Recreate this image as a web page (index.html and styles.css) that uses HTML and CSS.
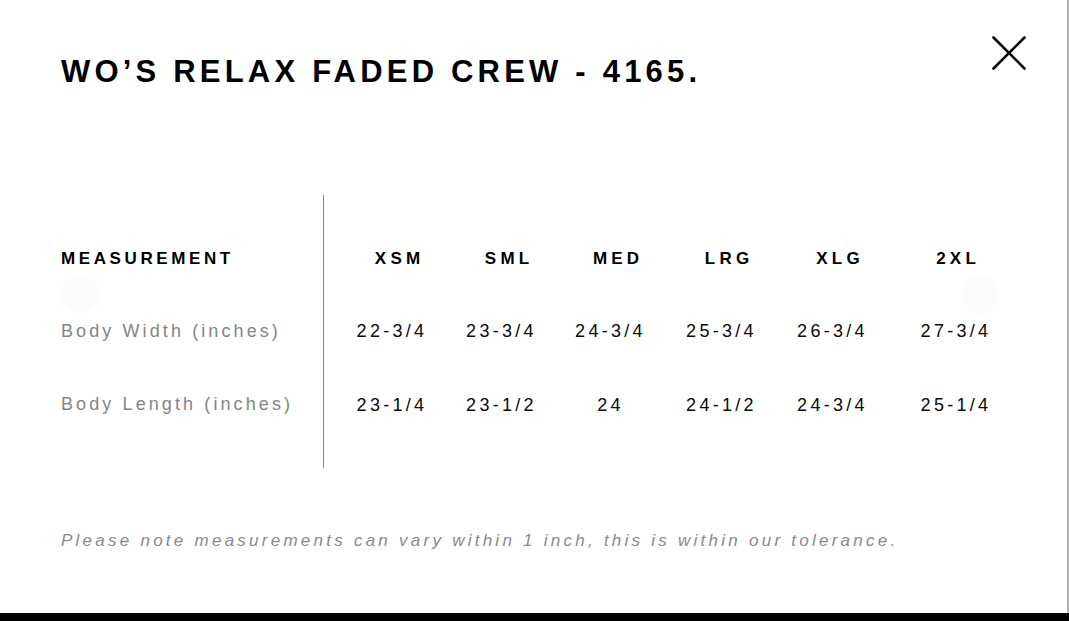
FILE: index.html
```html
<!DOCTYPE html>
<html lang="en">
<head>
<meta charset="utf-8">
<title>Size chart</title>
<link rel="stylesheet" href="styles.css">
</head>
<body>
<div class="modal">
  <header class="modal-head">
    <h1 class="title">WO’S RELAX FADED CREW - 4165.</h1>
    <button class="close" aria-label="Close">
      <svg width="34" height="34" viewBox="0 0 34 34"><path d="M1.5 1.5 L32.5 32.5 M32.5 1.5 L1.5 32.5" stroke="#000" stroke-width="2.6" stroke-linecap="round" fill="none"/></svg>
    </button>
  </header>

  <section class="chart">
    <div class="labels">
      <div class="cell head-label">MEASUREMENT</div>
      <div class="cell label">Body Width (inches)</div>
      <div class="cell label">Body Length (inches)</div>
    </div>
    <div class="sizes">
      <div class="cell size shift">XSM</div>
      <div class="cell size shift">SML</div>
      <div class="cell size shift">MED</div>
      <div class="cell size shift">LRG</div>
      <div class="cell size shift">XLG</div>
      <div class="cell size">2XL</div>

      <div class="cell val">22-3/4</div>
      <div class="cell val">23-3/4</div>
      <div class="cell val">24-3/4</div>
      <div class="cell val">25-3/4</div>
      <div class="cell val">26-3/4</div>
      <div class="cell val">27-3/4</div>

      <div class="cell val">23-1/4</div>
      <div class="cell val">23-1/2</div>
      <div class="cell val">24</div>
      <div class="cell val">24-1/2</div>
      <div class="cell val">24-3/4</div>
      <div class="cell val">25-1/4</div>
    </div>
    <span class="arrow arrow-left"></span>
    <span class="arrow arrow-right"></span>
  </section>

  <p class="note">Please note measurements can vary within 1 inch, this is within our tolerance.</p>
</div>
<div class="page-bar"></div>
</body>
</html>
```

FILE: styles.css
```css
* { box-sizing: border-box; }

html, body {
  margin: 0;
  padding: 0;
  background: #fff;
  font-family: "Liberation Sans", Arial, sans-serif;
  overflow: hidden;
}

.modal {
  width: 1069px;
  height: 613px;
  background: #fff;
  border-right: 2px solid #b5b5b5;
  padding: 0 42px 0 61px;
  display: flex;
  flex-direction: column;
  position: relative;
}

.modal-head {
  display: flex;
  justify-content: space-between;
  align-items: flex-start;
  padding-top: 36px;
}

.title {
  margin: 18px 0 0;
  font-size: 31px;
  line-height: 36px;
  font-weight: 700;
  letter-spacing: 4.2px;
  color: #000;
}

.close {
  border: 0;
  background: none;
  padding: 0;
  margin: 0 -1px 0 0;
  width: 34px;
  height: 34px;
  cursor: pointer;
}
.close svg { display: block; }

.chart {
  margin-top: 105px;
  height: 273px;
  display: flex;
  position: relative;
}

.labels {
  width: 262px;
  padding-top: 28px;
  display: flex;
  flex-direction: column;
}

.cell {
  height: 72px;
  display: flex;
  align-items: center;
  white-space: nowrap;
}

.head-label {
  font-size: 17px;
  font-weight: 700;
  letter-spacing: 3.6px;
  color: #000;
  height: 72px;
}

.label {
  font-size: 18px;
  letter-spacing: 3.1px;
  color: #858585;
}
.label + .label { height: 74px; }

.sizes {
  border-left: 1px solid #8a8a8a;
  padding: 28px 0 0 13px;
  display: grid;
  grid-template-columns: 110px 109px 109px 113px 109px 138px;
  grid-template-rows: 72px 74px 72px;
  align-content: start;
}

.size {
  justify-content: center;
  font-size: 17px;
  font-weight: 700;
  letter-spacing: 4.2px;
  color: #000;
  text-indent: 4.2px;
}
.size.shift { padding-left: 11px; }

.val {
  justify-content: center;
  font-size: 18px;
  letter-spacing: 3.3px;
  color: #0a0a0a;
}

.arrow {
  position: absolute;
  top: 81px;
  width: 38px;
  height: 38px;
  border-radius: 50%;
  background: rgba(0, 0, 0, 0.012);
}
.arrow-left { left: 0; }
.arrow-right { left: 900px; }

.note {
  margin: 63px 0 0;
  font-size: 17px;
  line-height: 20px;
  font-style: italic;
  letter-spacing: 3.25px;
  color: #8a8a8a;
}

.page-bar {
  height: 8px;
  background: #000;
}
```
